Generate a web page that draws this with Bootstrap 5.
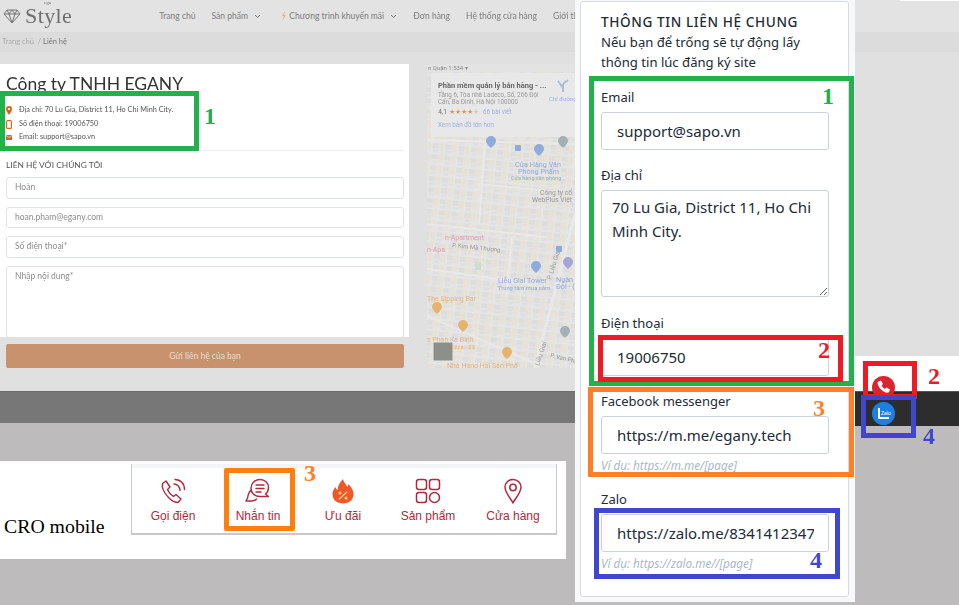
<!DOCTYPE html>
<html lang="vi">
<head>
<meta charset="utf-8">
<title>Thông tin liên hệ</title>
<link href="https://cdn.jsdelivr.net/npm/bootstrap@5.3.0/dist/css/bootstrap.min.css" rel="stylesheet">
<style>
html,body{margin:0;height:605px;overflow:hidden}
body{background:#bdbbbc;position:relative;width:959px;font-family:"Lato","Liberation Sans",sans-serif}
.shot-top{height:391px;background:#e0e0e0}
.shot-blur{filter:blur(.55px)}
.top-nav{height:32px;background:#e3e3e3;padding-left:3px;color:#777}
.logo-txt{font-family:"Liberation Serif",serif;font-size:22px;line-height:26px;color:#6e6e6e;margin-left:4px;position:relative;letter-spacing:.4px}
.logo-ega{position:absolute;left:19px;top:-3px;font-size:5px;line-height:6px;letter-spacing:0}
.nav-items{margin-left:87px;font-size:8.500px;gap:16px;color:#7c7c7c;white-space:nowrap}
.crumbs{height:20px;background:#dcdcdc;padding-left:2px;font-size:7.5px;line-height:20px;color:#aaa}
.crumbs b{font-weight:400;color:#777}
.content-row{padding-top:12px;gap:18px}
.left-col{width:409px}
.white-box{height:273px;background:#fff;overflow:hidden;padding:0 5px 0 6px}
.co-name{font-size:17.5px;line-height:22px;padding-top:9px;margin:0;color:#333;font-weight:400}
.info-list{margin-top:9px;height:47px;font-size:7.3px;color:#555;border-bottom:1px solid #eee}
.info-row{height:13.5px;gap:7px}
.form-title{font-size:8.4px;color:#555;margin:9px 0 7px;line-height:10px}
.fake-input{height:21.5px;border:1px solid #dfe3e8;border-radius:3px;padding:0 8px;font-size:8.5px;line-height:19px;color:#8d8d8d;margin-bottom:8px;background:#fff}
.fake-area{height:72px;margin-bottom:0}
.send-btn{margin:7px 5px 0 6px;height:24px;width:398px;background:#c9926f;border-radius:2px;color:#e9dccf;font-size:8.5px;line-height:24px;text-align:center}
.map-box{width:148px;height:304px;flex:none;background:#e3e3e3;filter:blur(.3px)}
.map-box svg{display:block}
.band{height:32px;background:#777;border-top:1px solid #6c6c6c}
.cro-wrap{margin-top:38px;width:566px;height:98px;background:#fff;padding:3px 0 0 131px;position:relative}
.cro-label{position:absolute;left:4px;top:53px;font-family:"Liberation Serif",serif;font-size:19.800px;line-height:24px;color:#000}
.dock{width:426px;height:71px;border:1px solid #c8c8c8;border-top:0;border-bottom-width:2px;background:#fff;box-shadow:inset 0 4px 0 #f3f4f5;padding-top:14px}
.dock-item{width:85px;color:#b2283d;font-family:"Liberation Sans",sans-serif;font-size:12px;line-height:14px;text-align:center}
.dock-item:first-child{margin-left:-1.500px}
.dock-item svg{display:block;margin:0 auto 5px}
.side-panel{position:absolute;left:575px;top:0;width:280px;height:602px;background:#f6f8fa;padding:1px 6px 0 5px;font-family:"Noto Sans","Open Sans",sans-serif;color:#212b36}
.setup-card{height:596px;border:1px solid #d5dbe1;border-radius:3px;background:#fff;padding:10px 19px 0 20px}
.setup-title{font-size:13.6px;line-height:20px;letter-spacing:.6px;font-weight:500;margin:0}
.setup-sub{font-size:13.100px;line-height:20px;margin:0 0 15px}
.fld-label{display:block;font-size:13px;line-height:20px;margin:0 0 5px}
.setup-card .form-control{font-family:"Noto Sans","Open Sans",sans-serif;height:38px;font-size:15px;line-height:24px;color:#212b36;padding:0 14px 0 15px;border:1px solid #c9d2da;border-radius:3px;margin-bottom:15px;box-shadow:none}
.setup-card textarea.form-control{height:107px;padding:4px 10px;margin-bottom:16px}
.setup-card .has-hint{margin-bottom:1px}
.fld-hint{font-size:11.700px;line-height:20px;font-style:italic;color:#a9b8c8;margin:0 0 14px}
.side-right{position:absolute;left:855px;top:356px;width:104px}
.sr-white{height:35px;background:#fff;padding-left:17px;padding-top:18px}
.sr-dark{height:35px;background:#2d2d2d;padding-left:17px;border-top:1px solid #555;padding-top:8px}
.top-strip{position:absolute;left:900px;top:0;width:59px;height:1px;background:#fff}
.ring{position:absolute;border-style:solid;border-width:5px}
.c-green{border-color:#22b14c}.c-red{border-color:#ed1c24}.c-orange{border-color:#ff7f27}.c-blue{border-color:#3f48cc}
.r1{left:0;top:91px;width:199px;height:60px}
.r2{left:589px;top:76px;width:265px;height:310px}
.r3{left:598px;top:335px;width:245px;height:47px}
.r4{left:588px;top:387px;width:266px;height:90px}
.r5{left:594px;top:508px;width:246px;height:71px}
.r6{left:863px;top:361px;width:54px;height:38px}
.r7{left:861px;top:395px;width:55px;height:43px;border-color:#3f48cc}
.r8{left:224px;top:468px;width:71px;height:63px;border-color:#ff7f0e;border-radius:2px}
.num{position:absolute;font-family:"Liberation Serif",serif;font-weight:700;font-size:24px;line-height:24px}
.t-green{color:#22b14c}.t-red{color:#ed1c24}.t-orange{color:#ff7f27}.t-blue{color:#3f48cc}
.n1{left:204px;top:104px}.n2{left:822px;top:84px}.n3{left:818px;top:338px}.n4{left:928px;top:364px}
.n5{left:813px;top:396px}.n6{left:304px;top:461px}.n7{left:923px;top:424px}.n8{left:810px;top:548px}
</style>
</head>
<body>
<div class="shot-top">
  <div class="shot-blur">
    <div class="top-nav d-flex align-items-center">
      <svg width="18" height="16" viewBox="0 0 18 16" fill="none" stroke="#777" stroke-width="1"><path d="M4 2h10l3 4-8 9-8-9zM1 6h16M6 6l3 9 3-9M4 2l2 4 3-4 3 4 2-4"/></svg>
      <span class="logo-txt"><span class="logo-ega">ega</span>Style</span>
      <div class="nav-items d-flex align-items-center">
        <span>Trang chủ</span>
        <span>Sản phẩm <svg width="7" height="5" viewBox="0 0 7 5" class="ms-1"><path d="M1 1l2.500 2.500L6 1" fill="none" stroke="#777"/></svg></span>
        <span class="ms-1"><svg width="6" height="10" viewBox="0 0 6 10"><path d="M4 0L1 5h2L1 10l4-6H3z" fill="#e8b27c"/></svg> Chương trình khuyến mãi <svg width="7" height="5" viewBox="0 0 7 5" class="ms-1"><path d="M1 1l2.500 2.500L6 1" fill="none" stroke="#777"/></svg></span>
        <span>Đơn hàng</span>
        <span>Hệ thống cửa hàng</span>
        <span>Giới th</span>
      </div>
    </div>
    <div class="crumbs">Trang chủ &nbsp;/ <b>Liên hệ</b></div>
    <div class="content-row d-flex">
      <div class="left-col">
        <div class="white-box">
          <h1 class="co-name">Công ty TNHH EGANY</h1>
          <div class="info-list">
            <div class="info-row d-flex align-items-center"><svg width="6" height="9" viewBox="0 0 6 9"><path d="M3 0a3 3 0 0 1 3 3c0 2-3 6-3 6S0 5 0 3a3 3 0 0 1 3-3z" fill="#d9631e"/><circle cx="3" cy="3" r="1.100" fill="#fff"/></svg><span>Địa chỉ: 70 Lu Gia, District 11, Ho Chi Minh City.</span></div>
            <div class="info-row d-flex align-items-center"><svg width="6" height="9" viewBox="0 0 6 9"><rect x=".6" y=".6" width="4.800" height="7.800" rx="1" fill="none" stroke="#d9631e" stroke-width="1.100"/></svg><span>Số điện thoại: 19006750</span></div>
            <div class="info-row d-flex align-items-center"><svg width="6" height="9" viewBox="0 0 6 9"><rect y="2" width="6" height="5" fill="#d9631e"/><path d="M0 2.500l3 2 3-2" fill="none" stroke="#fff" stroke-width=".6"/></svg><span>Email: support@sapo.vn</span></div>
          </div>
          <div class="form-title">LIÊN HỆ VỚI CHÚNG TÔI</div>
          <div class="fake-input">Hoàn</div>
          <div class="fake-input">hoan.pham@egany.com</div>
          <div class="fake-input">Số điện thoại*</div>
          <div class="fake-input fake-area">Nhập nội dung*</div>
        </div>
        <div class="send-btn">Gửi liên hệ của bạn</div>
      </div>
      <div class="map-box">
        <svg width="148" height="304" viewBox="0 0 148 304" font-family="Roboto,'Liberation Sans',sans-serif">
          <defs>
            <pattern id="blocks" width="13" height="11" patternUnits="userSpaceOnUse" patternTransform="rotate(6)">
              <rect x="1" y="1" width="6" height="5" fill="#dddddd"/>
              <rect x="8" y="1" width="4" height="7" fill="#e6e2d6" stroke="#e7dfc8" stroke-width=".5"/>
              <rect x="2" y="7" width="5" height="3" fill="#dfdfdf"/>
            </pattern>
          </defs>
          <rect width="148" height="304" fill="#e5e5e5"/>
          <rect width="148" height="304" fill="url(#blocks)"/>
          <g fill="none" stroke="#e9e9e9" stroke-width="2">
            <path d="M0 160l120 13M0 252l105 46M0 76l148 4M58 80l-6 80M50 120l80 8M85 173l-6 60M0 205l100 14"/>
            <path d="M108 304L148 150" stroke-width="3"/>
          </g>
          <rect x="48" y="198" width="6" height="8" fill="#cfdccd"/>
          <rect y="0" width="148" height="8" fill="#e3e3e3"/>
          <text x="1" y="6" font-size="6" fill="#888">n Quận 1:534 ▾</text>
          <rect x="4" y="9" width="144" height="64" fill="#e8e8e8"/>
          <text x="11" y="24" font-size="7.500" font-weight="700" fill="#666">Phần mềm quản lý bản hàng - ...</text>
          <text x="11" y="33" font-size="6.300" fill="#999">Tầng 6, Tòa nhà Ladeco, Số, 266 Đội</text>
          <text x="11" y="40" font-size="6.300" fill="#999">Cấn, Ba Đình, Hà Nội 100000</text>
          <text x="11" y="50" font-size="7" fill="#777">4,1 <tspan fill="#d99a55" font-size="6.500">★★★★</tspan><tspan fill="#ccc" font-size="6.500">★</tspan></text>
          <text x="56" y="50" font-size="6.300" fill="#9db0dc">66 bài viết</text>
          <text x="11" y="63" font-size="6.300" fill="#9db0dc">Xem bản đồ lớn hơn</text>
          <path d="M136 28v-8M136 24l-5-7M136 20l5-4" fill="none" stroke="#a9bedc" stroke-width="2"/>
          <text x="122" y="37" font-size="6" fill="#9db0dc">Chỉ đường</text>
          <g font-size="7.200" fill="#8fabdc">
            <text x="88" y="103">Cửa Hàng Văn</text><text x="91" y="110">Phòng Phẩm</text>
            <text x="84" y="116" font-size="5.500">Cửa hàng văn phòng</text>
            <text x="71" y="219">Liễu Giai Tower</text><text x="71" y="226" font-size="5.800">Trung tâm mua sắm</text>
            <text x="129" y="218">Ngân</text><text x="129" y="225">Đội - (</text>
          </g>
          <g font-size="6.800" fill="#999">
            <text x="113" y="131">Công ty cổ</text><text x="105" y="138">WebPlus Việt</text>
            <text transform="translate(25 183) rotate(6)" font-size="6">P. Kim Mã Thượng</text>
            <text transform="translate(124 216) rotate(-72)" font-size="6.500">P. Liễu Giai</text>
            <text transform="translate(112 302) rotate(-72)" font-size="6.500">Liễu Giai</text>
            <text transform="translate(123 293) rotate(14)" font-size="6">P. Van Phúc</text>
          </g>
          <g font-size="7" fill="#e59bb6"><text x="18" y="176">n-Apartment</text><text x="0" y="188">n-Apa</text></g>
          <g font-size="7" fill="#e0b680">
            <text x="0" y="237">The Sipping Bar</text><text x="0" y="278">s Phan Ke Binh</text>
            <text x="26" y="285" font-size="6">izza - $$</text><text x="20" y="304">Nhà Hàng Hải Sản Phố</text>
          </g>
          <g fill="#8fabdc">
            <path d="M64 72a5 5 0 0 1 5 5c0 3-5 7-5 7s-5-4-5-7a5 5 0 0 1 5-5zM112 80a5 5 0 0 1 5 5c0 3-5 7-5 7s-5-4-5-7a5 5 0 0 1 5-5zM109 197a5 5 0 0 1 5 5c0 3-5 7-5 7s-5-4-5-7a5 5 0 0 1 5-5z"/>
            <rect x="88" y="81" width="6" height="6" rx="1"/><rect x="129" y="182" width="6" height="6" rx="1"/>
            <path d="M141 193a5 5 0 0 1 5 5c0 3-5 7-5 7s-5-4-5-7a5 5 0 0 1 5-5z" fill="#a5a5d6"/>
          </g>
          <path d="M136 72a5 5 0 0 1 5 5c0 3-5 7-5 7s-5-4-5-7a5 5 0 0 1 5-5zM138 262a5 5 0 0 1 5 5c0 3-5 7-5 7s-5-4-5-7a5 5 0 0 1 5-5z" fill="#a3b0b6"/>
          <g fill="#e6b36c"><path d="M10 238a5 5 0 0 1 5 5c0 3-5 7-5 7s-5-4-5-7a5 5 0 0 1 5-5zM36 256a5 5 0 0 1 5 5c0 3-5 7-5 7s-5-4-5-7a5 5 0 0 1 5-5zM80 283a5 5 0 0 1 5 5c0 3-5 7-5 7s-5-4-5-7a5 5 0 0 1 5-5z"/></g>
          <rect x="6" y="278" width="20" height="19" fill="#8d8f89" stroke="#e6e6e6"/>
        </svg>
      </div>
    </div>
  </div>
</div>
<div class="band shot-blur"></div>
<div class="cro-wrap">
  <div class="cro-label">CRO mobile</div>
  <div class="dock d-flex">
    <div class="dock-item">
      <svg width="26" height="26" viewBox="0 0 26 26" fill="none" stroke="#b2283d" stroke-width="1.400" stroke-linecap="round" stroke-linejoin="round"><path d="M6 3L2.500 5.500C1.500 10 5 16 9 20c3 3 6 4.500 9 4.500l3-3.500-5-4.500-2.500 2C11 17 8.500 14 7.500 11.500l2.500-2.500z"/><path d="M14 6c3 0 6 2.500 6 6.500M15 1.500c5.500 0 9.500 4 9.500 10"/></svg>
      Gọi điện
    </div>
    <div class="dock-item">
      <svg width="26" height="26" viewBox="0 0 26 26" fill="none" stroke="#b2283d" stroke-width="1.400" stroke-linecap="round" stroke-linejoin="round"><path d="M15 1.500c5 0 8.500 3.500 8.500 8 0 3-1 5-3 6.500l3 2.500h-9c-5 0-8.500-3.800-8.500-8.500s4-8.500 9-8.500z"/><path d="M6 12c-2 2-3 5-3.500 8l-1.500 3h6c2 0 3.500-1 4.500-2"/><path d="M11 7h8M11 10.500h8M11 14h5"/></svg>
      Nhắn tin
    </div>
    <div class="dock-item">
      <svg width="26" height="26" viewBox="0 0 26 26"><path d="M13 1c1 4 3 5 4.500 8 .5-1 1-2 1-3 3 3 5 7 5 10 0 6-4.500 9.500-10.500 9.500S2.500 22 2.500 16c0-3 1.500-5 3-7 .5 1.500 1 2.500 2 3C7.500 8 10 4 13 1z" fill="#f0582a"/><g fill="#f7d48a"><circle cx="10" cy="15" r="1.500"/><circle cx="16" cy="20" r="1.500"/><path d="M16.500 13.500l1 .8-8 7.500-1-.8z"/></g></svg>
      Ưu đãi
    </div>
    <div class="dock-item">
      <svg width="26" height="26" viewBox="0 0 26 26" fill="none" stroke="#b2283d" stroke-width="1.500"><rect x="1.500" y="1.500" width="10" height="10" rx="2.500"/><rect x="14.500" y="1.500" width="10" height="10" rx="2.500"/><rect x="1.500" y="14.500" width="10" height="10" rx="2.500"/><circle cx="19.500" cy="19.500" r="5"/></svg>
      Sản phẩm
    </div>
    <div class="dock-item">
      <svg width="26" height="26" viewBox="0 0 26 26" fill="none" stroke="#b2283d" stroke-width="1.500"><path d="M13 1.500c4.700 0 8 3.500 8 7.800 0 5-5 10.500-8 15.500-3-5-8-10.500-8-15.500 0-4.300 3.300-7.800 8-7.800z"/><circle cx="13" cy="9.500" r="3.200"/></svg>
      Cửa hàng
    </div>
  </div>
</div>

<div class="top-strip"></div>
<div class="side-right">
  <div class="sr-white">
    <svg width="23" height="23" viewBox="0 0 23 23"><circle cx="11.500" cy="11.500" r="11.500" fill="#d9252f"/><path d="M6.500 5.500l2.500-1 2 3.500-1.500 1.500c.7 1.500 2 2.800 3.500 3.500l1.500-1.500 3.500 2-1 2.500c-1 1-3 .8-5-.3-3-1.700-5-4.200-6-7-.5-1.500-.7-2.700.5-3.200z" fill="#fff"/></svg>
  </div>
  <div class="sr-dark">
    <svg width="23" height="23" viewBox="0 0 23 23"><circle cx="11.500" cy="11.500" r="11.500" fill="#1d7fe6"/><path d="M6 6v9.500c0 1 .5 1.500 1.500 1.500H17v-2H8V6z" fill="#fff"/><text x="9" y="12.500" font-size="5" font-family="'Liberation Sans',sans-serif" fill="#fff">Zalo</text></svg>
  </div>
</div>

<aside class="side-panel">
  <div class="setup-card">
    <h2 class="setup-title">THÔNG TIN LIÊN HỆ CHUNG</h2>
    <p class="setup-sub">Nếu bạn để trống sẽ tự động lấy<br>thông tin lúc đăng ký site</p>
    <label class="fld-label" for="f1">Email</label>
    <input id="f1" class="form-control" value="support@sapo.vn">
    <label class="fld-label" for="f2">Địa chỉ</label>
    <textarea id="f2" class="form-control">70 Lu Gia, District 11, Ho Chi Minh City.</textarea>
    <label class="fld-label" for="f3">Điện thoại</label>
    <input id="f3" class="form-control" value="19006750">
    <label class="fld-label" for="f4">Facebook messenger</label>
    <input id="f4" class="form-control has-hint" value="https://m.me/egany.tech">
    <p class="fld-hint">Ví dụ: https://m.me/[page]</p>
    <label class="fld-label" for="f5">Zalo</label>
    <input id="f5" class="form-control has-hint" value="https://zalo.me/83414123479">
    <p class="fld-hint">Ví dụ: https://zalo.me//[page]</p>
  </div>
</aside>

<div class="ring c-green r1"></div>
<div class="ring c-green r2"></div>
<div class="ring c-red r3"></div>
<div class="ring c-orange r4"></div>
<div class="ring c-blue r5"></div>
<div class="ring c-red r6"></div>
<div class="ring r7"></div>
<div class="ring r8"></div>
<span class="num t-green n1">1</span>
<span class="num t-green n2">1</span>
<span class="num t-red n3">2</span>
<span class="num t-red n4">2</span>
<span class="num t-orange n5">3</span>
<span class="num t-orange n6">3</span>
<span class="num t-blue n7">4</span>
<span class="num t-blue n8">4</span>
</body>
</html>
